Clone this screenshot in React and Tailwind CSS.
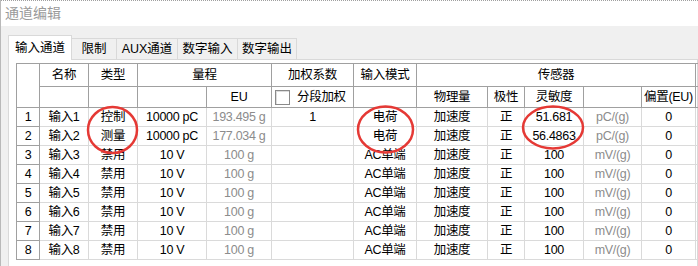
import React from 'react';

const rows = [
  { n: 1, name: '输入1', type: '控制', range: '10000 pC', eu: '193.495 g', w: '1', mode: '电荷', sens: '51.681', unit: 'pC/(g)' },
  { n: 2, name: '输入2', type: '测量', range: '10000 pC', eu: '177.034 g', w: '', mode: '电荷', sens: '56.4863', unit: 'pC/(g)' },
  ...[3, 4, 5, 6, 7, 8].map((n) => ({
    n, name: '输入' + n, type: '禁用', range: '10 V', eu: '100 g', w: '', mode: 'AC单端', sens: '100', unit: 'mV/(g)',
  })),
];

const widths = [23, 49, 49, 69, 65, 82, 63, 71, 37, 59, 58, 54, 60];
const tabs = [
  { t: '输入通道', w: 'w-[64px]' },
  { t: '限制', w: 'w-[45px]' },
  { t: 'AUX通道', w: 'w-[61px]' },
  { t: '数字输入', w: 'w-[60px]' },
  { t: '数字输出', w: 'w-[59px]' },
];

function App() {
  const hd = 'border border-[#a0a0a0] text-center font-normal p-0 whitespace-nowrap overflow-hidden';
  const td = 'border border-[#dadada] text-center p-0 whitespace-nowrap overflow-hidden';

  return (
    <div className="relative w-[698px] h-[266px] overflow-hidden bg-[#f0f0f0] border-l border-[#b9b9b9] font-['Liberation_Sans','Noto_Sans_CJK_SC',sans-serif] text-black">
      <div className="h-[26px] bg-white border-t border-dotted border-[#a0a0a0] flex items-center pl-[4px] text-[14px] text-[#9a9a9a]">
        通道编辑
      </div>

      <div className="pt-[9px] pl-[7px]">
        <div className="flex items-end text-[12.5px]">
          {tabs.map((tab, i) =>
            i === 0 ? (
              <div key={tab.t} className={'relative z-10 -mb-px h-[25px] bg-white border border-b-0 border-[#d9d9d9] flex items-center justify-center ' + tab.w}>
                {tab.t}
              </div>
            ) : (
              <div key={tab.t} className={'h-[21px] bg-[#f0f0f0] border border-b-0 border-l-0 border-[#d9d9d9] flex items-center justify-center ' + tab.w}>
                {tab.t}
              </div>
            )
          )}
        </div>

        <div className="bg-white border border-[#d9d9d9] pt-[3px] pl-[7px] h-[220px]">
          <table className="table-fixed border-collapse w-[739px] text-[12.5px] leading-none tracking-[-0.3px]">
            <colgroup>
              {widths.map((w, i) => (
                <col key={i} style={{ width: w }} />
              ))}
            </colgroup>
            <thead>
              <tr className="h-[23px]">
                <th rowSpan={2} className={hd}></th>
                <th className={hd}>名称</th>
                <th className={hd}>类型</th>
                <th colSpan={2} className={hd}>量程</th>
                <th className={hd}>加权系数</th>
                <th className={hd}>输入模式</th>
                <th colSpan={5} className={hd}>传感器</th>
                <th className={hd}></th>
              </tr>
              <tr className="h-[21px]">
                <th className={hd}></th>
                <th className={hd}></th>
                <th className={hd}></th>
                <th className={hd}>EU</th>
                <th className={hd}>
                  <div className="flex items-center pl-[3px] gap-[7px]">
                    <span className="w-[15px] h-[15px] border border-[#8a8a8a] bg-white shadow-[inset_1px_1px_0_#dcdcdc]"></span>
                    <span>分段加权</span>
                  </div>
                </th>
                <th className={hd}></th>
                <th className={hd}>物理量</th>
                <th className={hd}>极性</th>
                <th className={hd}>灵敏度</th>
                <th className={hd}></th>
                <th className={hd}>偏置(EU)</th>
                <th className={hd}></th>
              </tr>
            </thead>
            <tbody>
              {rows.map((r) => (
                <tr key={r.n} className="h-[19px]">
                  <td className="border border-[#a0a0a0] text-center p-0">{r.n}</td>
                  <td className={td}>{r.name}</td>
                  <td className={td}>{r.type}</td>
                  <td className={td}>{r.range}</td>
                  <td className={td + ' text-[#8c8c8c]'}>{r.eu}</td>
                  <td className={td}>{r.w}</td>
                  <td className={td}>{r.mode}</td>
                  <td className={td}>加速度</td>
                  <td className={td}>正</td>
                  <td className={td}>{r.sens}</td>
                  <td className={td + ' text-[#8c8c8c]'}>{r.unit}</td>
                  <td className={td}>0</td>
                  <td className={td}></td>
                </tr>
              ))}
            </tbody>
          </table>
        </div>
      </div>

      <svg className="absolute left-0 top-0 pointer-events-none" width="698" height="266">
        <ellipse cx="111.5" cy="130" rx="24.5" ry="23" fill="none" stroke="#e53935" strokeWidth="2.5" />
        <ellipse cx="384.5" cy="129.5" rx="27.5" ry="23" fill="none" stroke="#e53935" strokeWidth="2.5" />
        <ellipse cx="552" cy="127.5" rx="30" ry="21" fill="none" stroke="#e53935" strokeWidth="2.5" />
      </svg>
    </div>
  );
}

export default App;
